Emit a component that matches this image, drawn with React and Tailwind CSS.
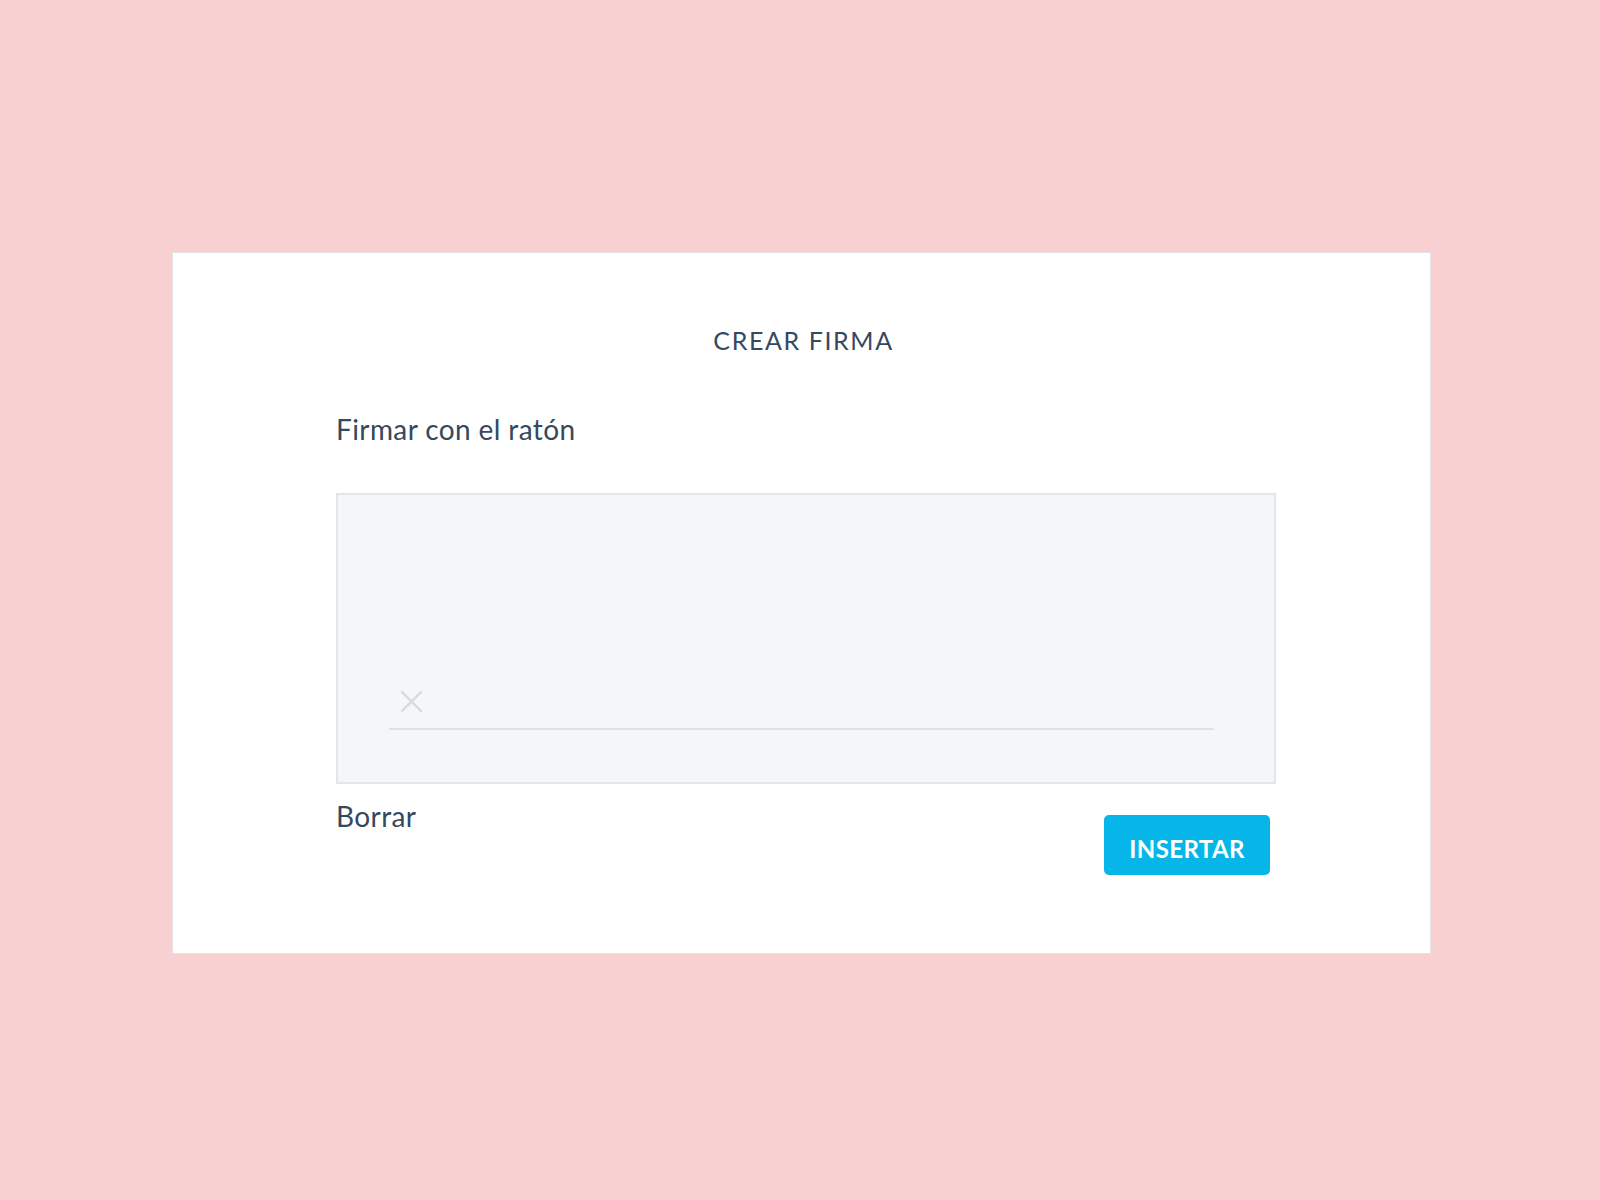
export default function App() {
  return (
    <div className="min-h-screen w-full bg-[#f8d0d2] pt-[252px] pl-[172px] pb-[246px]" style={{ fontFamily: "Lato, 'Open Sans', sans-serif" }}>
      <div className="w-[1259px] h-[702px] border border-[#e4e4e6] bg-white text-[#34495e]">
        <div className="pt-[75px] pl-[4px] text-center text-[25px] leading-none tracking-[1.6px]">CREAR FIRMA</div>
        <div className="pl-[163px]">
          <div className="mt-[62px] text-[28px] leading-none tracking-[0.4px]">Firmar con el ratón</div>
          <div className="mt-[50px] w-[940px] h-[291px] border-2 border-[#e3e5e8] bg-[#f5f6f8] pl-[51px] pt-[195px]">
            <svg width="23" height="23" viewBox="0 0 23 23" className="ml-[11px] block">
              <path d="M2 2 L21 21 M21 2 L2 21" stroke="#d9d9dd" strokeWidth="2.4" strokeLinecap="round" fill="none" />
            </svg>
            <div className="mt-[15px] w-[825px] h-[2px] bg-[#e0e1e4]"></div>
          </div>
          <div className="flex w-[940px] items-start justify-between">
            <div className="mt-[18px] text-[28px] leading-none tracking-[0.4px]">Borrar</div>
            <button className="mt-[31px] mr-[6px] flex h-[60px] w-[166px] items-center justify-center rounded-[5px] bg-[#06b6e8] pt-[7px] text-[24px] font-bold leading-none tracking-[0.4px] text-white">
              INSERTAR
            </button>
          </div>
        </div>
      </div>
    </div>
  );
}
